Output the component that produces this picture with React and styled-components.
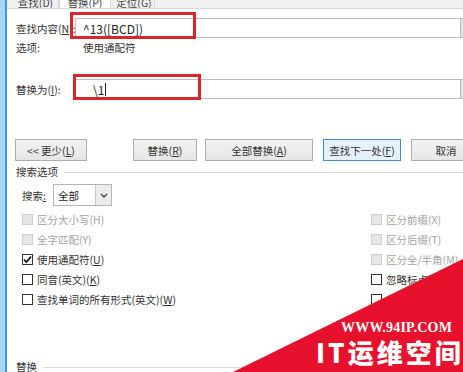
import styled, { createGlobalStyle } from "styled-components"

const GlobalStyle = createGlobalStyle`
    body {
        margin: 0;
        background: #ffffff;
        font-family: "Noto Sans CJK SC", "Noto Sans", sans-serif;
        font-size: 10.5px;
        color: #333333;
    }
`

const Frame = styled.div`
    position: relative;
    display: flex;
    width: 463px;
    height: 372px;
    overflow: hidden;
`

const BlueEdge = styled.div`
    width: 7px;
    flex-shrink: 0;
    background: linear-gradient(to right, #a9d4f3 0 5px, #3f95d6 5px 7px);
`

const Dialog = styled.div`
    flex: 1;
    display: flex;
    flex-direction: column;
    background: #ffffff;
    overflow: hidden;
`

const TabBar = styled.div`
    height: 8px;
    flex-shrink: 0;
    display: flex;
    padding-left: 5px;
    background: #f0f0f0;
    border-bottom: 1px solid #d9d9d9;
    overflow: hidden;
`

const Tab = styled.div`
    width: ${p => p.$w}px;
    margin-right: ${p => p.$gap || 0}px;
    display: flex;
    justify-content: center;
    align-items: flex-end;
    line-height: 16px;
    height: 8px;
    background: ${p => (p.$active ? "#ffffff" : "transparent")};
    border-left: 1px solid ${p => (p.$active ? "#d9d9d9" : "transparent")};
    border-right: 1px solid #d9d9d9;
    color: #444;
    span {
        display: block;
        margin-bottom: -3px;
    }
`

const Body = styled.div`
    padding-left: 9px;
    display: flex;
    flex-direction: column;
`

const FieldRow = styled.div`
    display: flex;
    align-items: center;
    height: 20px;
    margin-top: ${p => p.$top}px;
`

const FieldLabel = styled.div`
    width: 59px;
    flex-shrink: 0;
    white-space: nowrap;
`

const TextBox = styled.div`
    flex: 1;
    height: 20px;
    box-sizing: border-box;
    border: 1px solid #bdbdbd;
    border-right: none;
    display: flex;
    align-items: center;
    padding-left: ${p => p.$pad}px;
    font-size: 12px;
    color: #222;
    white-space: nowrap;
`

const DropButton = styled.div`
    width: 4px;
    height: 20px;
    box-sizing: border-box;
    margin-right: -1px;
    background: #e3e3e3;
    border: 1px solid #bdbdbd;
`

const Caret = styled.span`
    display: inline-block;
    width: 1px;
    height: 13px;
    margin-left: 1px;
    background: #222;
`

const InfoRow = styled.div`
    display: flex;
    line-height: 16px;
    margin-top: 2px;
`

const InfoLabel = styled.div`
    width: 67px;
`

const ButtonRow = styled.div`
    display: flex;
    margin-top: 40px;
    height: 22px;
    margin-left: -1px;
`

const Button = styled.div`
    width: ${p => p.$w}px;
    margin-left: ${p => p.$gap || 0}px;
    flex-shrink: 0;
    height: 22px;
    box-sizing: border-box;
    display: flex;
    align-items: center;
    justify-content: center;
    border: 1px solid ${p => (p.$primary ? "#3c8ad0" : "#adadad")};
    background: ${p => (p.$primary ? "#e5f1fb" : "linear-gradient(#f2f2f2, #e6e6e6)")};
    color: #333;
    white-space: nowrap;
`

const SectionHead = styled.div`
    display: flex;
    align-items: center;
    line-height: 14px;
    margin-top: ${p => p.$top}px;
    &::after {
        content: "";
        flex: 1;
        height: 1px;
        margin-left: 6px;
        background: #dcdcdc;
    }
`

const SearchRow = styled.div`
    display: flex;
    align-items: center;
    margin-top: 5px;
    margin-left: 6px;
    height: 22px;
`

const SearchLabel = styled.div`
    width: 31px;
`

const Select = styled.div`
    width: 59px;
    height: 22px;
    box-sizing: border-box;
    border: 1px solid #b5b5b5;
    display: flex;
    align-items: center;
`

const SelectValue = styled.div`
    flex: 1;
    padding-left: 4px;
    color: #222;
`

const SelectArrow = styled.div`
    width: 15px;
    height: 20px;
    display: flex;
    align-items: center;
    justify-content: center;
    background: #ececec;
    border-left: 1px solid #c9c9c9;
`

const OptionGrid = styled.div`
    display: grid;
    grid-template-columns: 1fr 92px;
    grid-auto-rows: 20px;
    margin-top: 3px;
    margin-left: 6px;
`

const Option = styled.div`
    display: flex;
    align-items: center;
    white-space: nowrap;
    color: ${p => (p.$disabled ? "#a3a3a3" : "#333")};
`

const Box = styled.div`
    width: 11px;
    height: 11px;
    flex-shrink: 0;
    margin-right: 4px;
    box-sizing: border-box;
    border: 1px solid ${p => (p.$disabled ? "#cfcfcf" : "#333")};
    background: ${p => (p.$disabled ? "#e6e6e6" : "#fff")};
    display: flex;
    align-items: center;
    justify-content: center;
`

const RedMark = styled.div`
    position: absolute;
    left: ${p => p.$x}px;
    top: ${p => p.$y}px;
    width: ${p => p.$w}px;
    height: ${p => p.$h}px;
    box-sizing: border-box;
    border: 3px solid #d8262c;
    pointer-events: none;
`

const Watermark = styled.div`
    position: absolute;
    left: 0;
    top: 0;
    width: 463px;
    height: 372px;
    pointer-events: none;
`

const WmSite = styled.div`
    position: absolute;
    left: 341px;
    top: 321px;
    font-family: "Liberation Serif", serif;
    font-weight: bold;
    font-size: 14px;
    line-height: 14px;
    color: #fff;
    letter-spacing: 0.2px;
`

const WmTitle = styled.div`
    position: absolute;
    left: 316px;
    top: 338px;
    font-family: "Noto Sans CJK SC", sans-serif;
    font-weight: 900;
    font-size: 26px;
    line-height: 28px;
    letter-spacing: 3px;
    color: #fff;
    white-space: nowrap;
`

const leftOptions = [
    { text: "区分大小写(H)", disabled: true },
    { text: "全字匹配(Y)", disabled: true },
    { text: "使用通配符", key: "U", checked: true },
    { text: "同音(英文)", key: "K" },
    { text: "查找单词的所有形式(英文)", key: "W" },
]

const rightOptions = [
    { text: "区分前缀(X)", disabled: true },
    { text: "区分后缀(T)", disabled: true },
    { text: "区分全/半角(M)", disabled: true },
    { text: "忽略标点符号", key: "S" },
    { text: "忽略空格", key: "W" },
]

function Check({ checked, disabled }) {
    return (
        <Box $disabled={disabled}>
            {checked && (
                <svg width="9" height="9" viewBox="0 0 9 9">
                    <path d="M1 4.6 L3.4 7 L8 1.6" fill="none" stroke="#111" strokeWidth="1.7" />
                </svg>
            )}
        </Box>
    )
}

function OptionItem({ opt }) {
    return (
        <Option $disabled={opt.disabled}>
            <Check checked={opt.checked} disabled={opt.disabled} />
            {opt.text}
            {opt.key && <>(<u>{opt.key}</u>)</>}
        </Option>
    )
}

function App() {
    const items = []
    leftOptions.forEach((l, i) => {
        items.push(<OptionItem key={"l" + i} opt={l} />)
        items.push(<OptionItem key={"r" + i} opt={rightOptions[i]} />)
    })
    return (
        <Frame>
            <GlobalStyle />
            <BlueEdge />
            <Dialog>
                <TabBar>
                    <Tab $w={45}><span>查找(D)</span></Tab>
                    <Tab $w={50} $active $gap={2}><span>替换(P)</span></Tab>
                    <Tab $w={40}><span>定位(G)</span></Tab>
                </TabBar>
                <Body>
                    <FieldRow $top={9}>
                        <FieldLabel>查找内容(<u>N</u>):</FieldLabel>
                        <TextBox $pad={7}>^13([BCD])</TextBox>
                        <DropButton />
                    </FieldRow>
                    <InfoRow>
                        <InfoLabel>选项:</InfoLabel>
                        <div>使用通配符</div>
                    </InfoRow>
                    <FieldRow $top={23}>
                        <FieldLabel>替换为(<u>I</u>):</FieldLabel>
                        <TextBox $pad={17}>\1<Caret /></TextBox>
                        <DropButton />
                    </FieldRow>
                    <ButtonRow>
                        <Button $w={72}>&lt;&lt; 更少(<u>L</u>)</Button>
                        <Button $w={64} $gap={46}>替换(<u>R</u>)</Button>
                        <Button $w={108} $gap={8}>全部替换(<u>A</u>)</Button>
                        <Button $w={78} $gap={10} $primary>查找下一处(<u>F</u>)</Button>
                        <Button $w={70} $gap={10}>取消</Button>
                    </ButtonRow>
                    <SectionHead $top={4}>搜索选项</SectionHead>
                    <SearchRow>
                        <SearchLabel>搜索<u>:</u></SearchLabel>
                        <Select>
                            <SelectValue>全部</SelectValue>
                            <SelectArrow>
                                <svg width="8" height="5" viewBox="0 0 8 5">
                                    <path d="M1 1 L4 4 L7 1" fill="none" stroke="#444" strokeWidth="1.3" />
                                </svg>
                            </SelectArrow>
                        </Select>
                    </SearchRow>
                    <OptionGrid>{items}</OptionGrid>
                    <SectionHead $top={51}>替换</SectionHead>
                </Body>
            </Dialog>
            <RedMark $x={70} $y={12} $w={126} $h={27} />
            <RedMark $x={73} $y={74} $w={128} $h={26} />
            <Watermark>
                <svg width="463" height="372" viewBox="0 0 463 372">
                    <polygon points="233,372 463,259 463,372" fill="#e8112d" />
                </svg>
                <WmSite>WWW.94IP.COM</WmSite>
                <WmTitle>IT运维空间</WmTitle>
            </Watermark>
        </Frame>
    )
}

export default App
